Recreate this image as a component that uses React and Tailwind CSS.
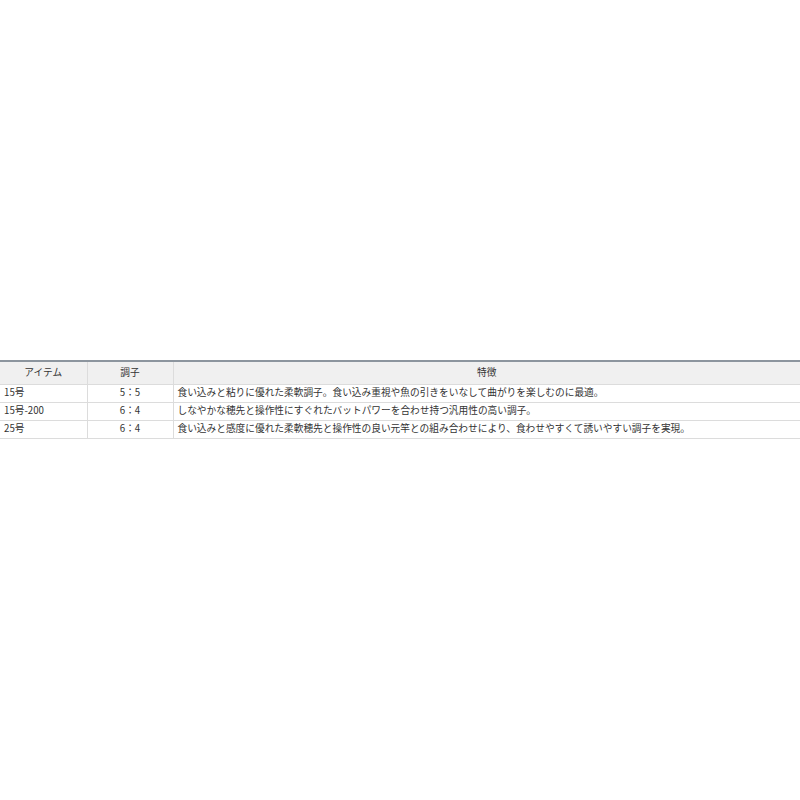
const rows = [
  { item: '15号', tone: '5：5', desc: '食い込みと粘りに優れた柔軟調子。食い込み重視や魚の引きをいなして曲がりを楽しむのに最適。' },
  { item: '15号-200', tone: '6：4', desc: 'しなやかな穂先と操作性にすぐれたバットパワーを合わせ持つ汎用性の高い調子。' },
  { item: '25号', tone: '6：4', desc: '食い込みと感度に優れた柔軟穂先と操作性の良い元竿との組み合わせにより、食わせやすくて誘いやすい調子を実現。' },
];

export default function App() {
  return (
    <div className="w-[800px] h-[800px] bg-white pt-[360px]" style={{ fontFamily: '"Noto Sans CJK JP", "Noto Sans", sans-serif' }}>
      <table className="w-full border-collapse text-[9.7px] text-[#333] border-t-2 border-t-[#8c959e] table-fixed">
        <colgroup>
          <col className="w-[87px]" />
          <col className="w-[86px]" />
          <col />
        </colgroup>
        <thead>
          <tr className="bg-[#f0f0f0] h-[23px]">
            <th className="font-normal text-center border-r border-b border-[#dcdcdc]">アイテム</th>
            <th className="font-normal text-center border-r border-b border-[#dcdcdc]">調子</th>
            <th className="font-normal text-center border-b border-[#dcdcdc]">特徴</th>
          </tr>
        </thead>
        <tbody>
          {rows.map((r) => (
            <tr key={r.item} className="h-[18px]">
              <td className="px-1 text-left border-r border-b border-[#dcdcdc] leading-none">{r.item}</td>
              <td className="text-center border-r border-b border-[#dcdcdc] leading-none">{r.tone}</td>
              <td className="px-1 text-left border-b border-[#dcdcdc] leading-none whitespace-nowrap">{r.desc}</td>
            </tr>
          ))}
        </tbody>
      </table>
    </div>
  );
}
